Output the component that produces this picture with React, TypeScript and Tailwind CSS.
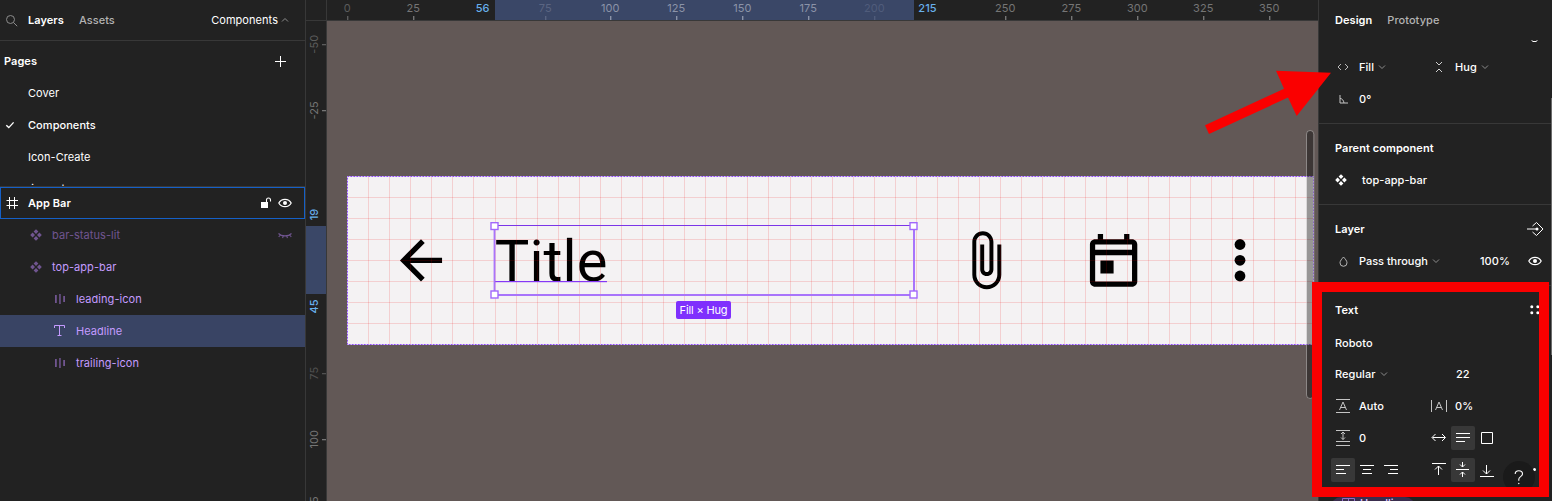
import type { ReactNode } from "react";

type IconProps = { className?: string };

const Chevron = ({ up = false }: { up?: boolean }) => (
  <svg width="8" height="8" viewBox="0 0 8 8" fill="none" stroke="#8c8c8c" strokeWidth="1">
    <path d={up ? "M1 5.5 4 2.5 7 5.5" : "M1 2.5 4 5.5 7 2.5"} />
  </svg>
);

const ComponentIcon = ({ className = "" }: IconProps) => (
  <svg className={className} width="16" height="16" viewBox="0 0 16 16" fill="currentColor">
    <path d="M8 2.2 10.4 4.6 8 7 5.6 4.6Z M8 9 10.4 11.4 8 13.8 5.6 11.4Z M4.6 5.6 7 8 4.6 10.4 2.2 8Z M11.4 5.6 13.8 8 11.4 10.4 9 8Z" />
  </svg>
);

const FrameIcon = () => (
  <svg width="16" height="16" viewBox="0 0 16 16" stroke="#fff" strokeWidth="1">
    <path d="M5.5 2v12M10.5 2v12M2.5 5.5h11.5M2.5 10.5h11.5" />
  </svg>
);

const StackIcon = () => (
  <svg className="text-[#705590]" width="16" height="16" viewBox="0 0 16 16" fill="currentColor">
    <path d="M3 4h1.8v8H3zM7.2 3h1.5v10H7.2zM11.2 5h1.8v6h-1.8z" />
  </svg>
);

const TextIcon = () => (
  <svg width="16" height="16" viewBox="0 0 16 16" fill="none" stroke="#c49bff">
    <path d="M2.5 5V2.5h10V5M7.5 2.5v10M5.5 12.5h4" />
  </svg>
);

const EyeIcon = () => (
  <svg width="16" height="16" viewBox="0 0 16 16" fill="none" stroke="#fff" strokeWidth="1.2">
    <path d="M1.8 8C3.2 5.4 5.4 4.3 8 4.3S12.8 5.4 14.2 8C12.8 10.6 10.6 11.7 8 11.7S3.2 10.6 1.8 8Z" />
    <circle cx="8" cy="8" r="2" fill="#fff" stroke="none" />
  </svg>
);

const ClosedEyeIcon = () => (
  <svg width="16" height="16" viewBox="0 0 16 16" fill="none" stroke="#705590" strokeWidth="1.1">
    <path d="M1.5 6.5C4.5 9.7 11.5 9.7 14.5 6.5M3.3 8 1.7 10M6.2 9 5.6 11.2M9.8 9l.6 2.2M12.7 8l1.6 2" />
  </svg>
);

const UnlockIcon = () => (
  <svg width="12" height="14" viewBox="0 0 12 14" fill="none">
    <rect x="1" y="6" width="7" height="6" fill="#fff" />
    <path d="M6.5 6V4a2 2 0 0 1 4 0v1.5" stroke="#fff" strokeWidth="1.1" />
  </svg>
);

function PageRow({ label, checked = false }: { label: string; checked?: boolean }) {
  return (
    <div className="flex h-8 shrink-0 items-center">
      <div className="flex w-7 pl-[5px]">
        {checked && (
          <svg width="10" height="10" viewBox="0 0 10 10" fill="none" stroke="#fff" strokeWidth="1.4">
            <path d="M1.3 5.2 3.8 7.6 8.6 2.4" />
          </svg>
        )}
      </div>
      <span className={checked ? "font-medium" : ""}>{label}</span>
    </div>
  );
}

function LayerRow({ icon, label, className, trailing }: { icon: ReactNode; label: string; className: string; trailing?: ReactNode }) {
  return (
    <div className={`flex h-8 items-center gap-2 ${className}`}>
      {icon}
      <span>{label}</span>
      <div className="ml-auto">{trailing}</div>
    </div>
  );
}

function LayersPanel() {
  return (
    <aside className="flex h-full w-[306px] shrink-0 flex-col border-r border-[#383838] bg-[#222]">
      <header className="flex h-[41px] shrink-0 items-center border-b border-[#383838] pl-[5px]">
        <svg width="13" height="13" viewBox="0 0 13 13" fill="none" stroke="#8c8c8c" strokeWidth="1">
          <circle cx="5.5" cy="5.5" r="4" />
          <path d="m8.5 8.5 3.7 3.7" />
        </svg>
        <span className="ml-[10px] font-semibold">Layers</span>
        <span className="ml-[15px] font-medium text-[#b3b3b3]">Assets</span>
        <div className="mr-4 ml-auto flex items-center gap-[3px]">
          <span>Components</span>
          <Chevron up />
        </div>
      </header>
      <section className="flex h-[146px] shrink-0 flex-col overflow-hidden border-b border-[#383838] pt-1">
        <div className="flex h-8 shrink-0 items-center justify-between pr-[19px] pl-1 font-semibold">
          <span>Pages</span>
          <svg width="11" height="11" viewBox="0 0 11 11" stroke="#fff">
            <path d="M5.5 0v11M0 5.5h11" />
          </svg>
        </div>
        <PageRow label="Cover" />
        <PageRow label="Components" checked />
        <PageRow label="Icon-Create" />
        <PageRow label=".import" />
      </section>
      <section>
        <LayerRow
          icon={<FrameIcon />}
          label="App Bar"
          className="border border-[#1560c8] pr-[11px] pl-[3px] font-semibold"
          trailing={
            <div className="flex items-center gap-[5px]">
              <UnlockIcon />
              <EyeIcon />
            </div>
          }
        />
        <LayerRow icon={<ComponentIcon />} label="bar-status-lit" className="pr-3 pl-7 text-[#705590]" trailing={<ClosedEyeIcon />} />
        <LayerRow icon={<ComponentIcon className="text-[#705590]" />} label="top-app-bar" className="pl-7 text-[#c49bff]" />
        <LayerRow icon={<StackIcon />} label="leading-icon" className="pl-[52px] text-[#c49bff]" />
        <LayerRow icon={<TextIcon />} label="Headline" className="bg-[#394464] pl-[52px] text-[#c49bff]" />
        <LayerRow icon={<StackIcon />} label="trailing-icon" className="pl-[52px] text-[#c49bff]" />
      </section>
    </aside>
  );
}

const horizontalMarks = [
  { value: "0", at: 347, color: "#5c5c5c" },
  { value: "25", at: 413, color: "#757575" },
  { value: "75", at: 545, color: "#5a6582" },
  { value: "100", at: 610, color: "#8b93a8" },
  { value: "125", at: 676, color: "#8b93a8" },
  { value: "150", at: 742, color: "#8b93a8" },
  { value: "175", at: 808, color: "#8b93a8" },
  { value: "200", at: 874, color: "#505c7b" },
  { value: "250", at: 1005, color: "#757575" },
  { value: "275", at: 1071, color: "#757575" },
  { value: "300", at: 1137, color: "#757575" },
  { value: "325", at: 1203, color: "#757575" },
  { value: "350", at: 1269, color: "#757575" },
];

const verticalMarks = [
  { value: "-50", at: 44, color: "#5c5c5c" },
  { value: "-25", at: 110, color: "#757575" },
  { value: "75", at: 373, color: "#505050" },
  { value: "100", at: 439, color: "#757575" },
  { value: "125", at: 505, color: "#757575" },
];

function HorizontalRuler() {
  return (
    <div className="relative h-[21px] flex-1 overflow-hidden border-b border-[#383838]">
      <div className="absolute top-0 left-[168px] h-5 w-[419px] bg-[#3a4767]" />
      <svg className="absolute inset-0" width="991" height="20" viewBox="327 0 991 20" fontSize="11" textAnchor="middle">
        {horizontalMarks.map((m) => (
          <g key={m.value} fill={m.color}>
            <text x={m.at + 0.3} y="11.5">{m.value}</text>
            <rect x={m.at} y="16" width="1.4" height="4" />
          </g>
        ))}
        <g fill="#68b0ec" fontWeight="500">
          <text x="482.7" y="11.5">56</text>
          <text x="927.5" y="11.5">215</text>
        </g>
      </svg>
    </div>
  );
}

function VerticalRuler() {
  return (
    <div className="relative h-[480px] w-[21px] shrink-0 overflow-hidden border-r border-[#383838]">
      <div className="absolute top-[205px] left-0 h-[68px] w-5 bg-[#3a4767]" />
      <svg className="absolute inset-0" width="20" height="480" viewBox="306 21 20 480" fontSize="11" textAnchor="middle">
        {verticalMarks.map((m) => (
          <g key={m.value} fill={m.color}>
            <text transform={`translate(317.5 ${m.at + 0.3}) rotate(-90)`}>{m.value}</text>
            <rect x="322" y={m.at} width="4" height="1.3" />
          </g>
        ))}
        <g fill="#68b0ec" fontWeight="500">
          <text transform="translate(317.5 214.5) rotate(-90)">19</text>
          <text transform="translate(317.5 306.5) rotate(-90)">45</text>
        </g>
      </svg>
    </div>
  );
}

const gridColumns = Array.from({ length: 45 }, (_, i) => Math.floor(347.5 + 21.074 * (i + 1)));
const gridRows = [197, 218, 239, 260, 281, 302, 323];

function Canvas() {
  return (
    <div className="relative h-[480px] flex-1 overflow-hidden bg-[#625856]">
      <svg className="absolute inset-0" width="991" height="480" viewBox="327 21 991 480">
        <rect x="347" y="176" width="967" height="169" fill="#f4f2f3" />
        <g transform="translate(389.4 228.8) scale(2.633)">
          <path d="M20 11H7.83l5.59-5.59L12 4l-8 8 8 8 1.41-1.41L7.83 13H20v-2z" />
        </g>
        <g transform="translate(953.9 228.6) scale(2.633)">
          <path d="M16.5 6v11.5c0 2.21-1.79 4-4 4s-4-1.79-4-4V5c0-1.38 1.12-2.5 2.5-2.5s2.5 1.12 2.5 2.5v10.5c0 .55-.45 1-1 1s-1-.45-1-1V6H10v9.5c0 1.38 1.12 2.5 2.5 2.5s2.5-1.12 2.5-2.5V5c0-2.21-1.79-4-4-4S7 2.79 7 5v12.5c0 3.04 2.46 5.5 5.5 5.5s5.5-2.46 5.5-5.5V6h-1.5z" />
        </g>
        <g transform="translate(1082 228.8) scale(2.633)">
          <path d="M19 4h-1V2h-2v2H8V2H6v2H5c-1.11 0-1.99.9-1.99 2L3 20c0 1.1.89 2 2 2h14c1.1 0 2-.9 2-2V6c0-1.1-.9-2-2-2zm0 16H5V10h14v10zm0-12H5V6h14v2zM7 12h5v5H7z" />
        </g>
        <g>
          <circle cx="1240" cy="244.5" r="5.4" />
          <circle cx="1240" cy="260.3" r="5.4" />
          <circle cx="1240" cy="276" r="5.4" />
        </g>
        <text x="494.8" y="281" fontSize="57.93" style={{ fontFamily: "Roboto, sans-serif" }}>Title</text>
        <g fill="#f00000" fillOpacity="0.14">
          {gridColumns.map((x) => (
            <rect key={x} x={x} y="176" width="1" height="169" />
          ))}
          {gridRows.map((y) => (
            <rect key={y} x="347" y={y} width="967" height="1" />
          ))}
        </g>
        <rect x="347.5" y="176.5" width="966" height="168" fill="none" stroke="#d6c3f2" />
        <rect x="347.5" y="176.5" width="966" height="168" fill="none" stroke="#8a3ffc" strokeDasharray="1.5 1.5" strokeOpacity="0.9" />
        <rect x="494" y="281" width="113" height="1.2" fill="#8638f5" />
        <rect x="494" y="225" width="420" height="1" fill="#7b35e8" />
        <g fill="#a874fb">
          <rect x="494" y="294" width="420" height="2" />
          <rect x="493.6" y="226" width="1.8" height="69" />
          <rect x="913" y="226" width="2" height="69" />
        </g>
        <g fill="#fff" stroke="#a168fb" strokeWidth="1.4">
          <rect x="491" y="222.7" width="7" height="6.8" />
          <rect x="910" y="222.7" width="7" height="6.8" />
          <rect x="491" y="291" width="7" height="7" />
          <rect x="910" y="291" width="7" height="7" />
        </g>
        <rect x="1306.5" y="130.5" width="7.3" height="268" rx="3.6" fill="#000" fillOpacity="0.38" stroke="#fff" strokeOpacity="0.35" />
      </svg>
      <div className="absolute top-[280px] left-[349px] flex h-[18px] w-[55px] items-center justify-center rounded-[2px] bg-[#7f30fd] tracking-[-0.15px] whitespace-nowrap">
        Fill × Hug
      </div>
    </div>
  );
}

function Cell({ icon, children, chevron = false, className = "w-24" }: { icon: ReactNode; children: ReactNode; chevron?: boolean; className?: string }) {
  return (
    <div className={`flex shrink-0 items-center ${className}`}>
      <div className="mr-1 flex w-6 justify-center">{icon}</div>
      <span className="mr-1 whitespace-nowrap">{children}</span>
      {chevron && <Chevron />}
    </div>
  );
}

function Toggle({ active = false, d, className = "" }: { active?: boolean; d: string; className?: string }) {
  return (
    <div className={`flex h-6 w-6 items-center justify-center rounded-[2px] ${active ? "bg-[#383838]" : ""} ${className}`}>
      <svg width="24" height="24" viewBox="0 0 24 24" fill="none" stroke="#fff">
        <path d={d} />
      </svg>
    </div>
  );
}

function DesignPanel() {
  return (
    <aside className="relative flex h-full w-[234px] shrink-0 flex-col overflow-hidden border-l border-[#383838] bg-[#222] font-medium">
      <header className="flex h-10 shrink-0 items-center gap-[15px] pl-4">
        <span className="font-semibold">Design</span>
        <span className="text-[#b3b3b3]">Prototype</span>
      </header>
      <section className="flex h-[84px] shrink-0 flex-col border-b border-[#383838]">
        <div className="flex h-[11px] justify-end pr-[14px]">
          <svg width="7" height="4" viewBox="0 0 7 4" fill="none" stroke="#fff">
            <path d="M.5.3 2 1.5h3L6.5.3" />
          </svg>
        </div>
        <div className="flex h-8 items-center pl-3">
          <Cell
            chevron
            icon={
              <svg width="12" height="10" viewBox="0 0 12 10" fill="none" stroke="#b8b8b8">
                <path d="M4 2 1 5l3 3M8 2l3 3-3 3" />
              </svg>
            }
          >
            Fill
          </Cell>
          <Cell
            chevron
            icon={
              <svg width="10" height="12" viewBox="0 0 10 12" fill="none" stroke="#d0d0d0">
                <path d="m2 1 3 3 3-3M2 11l3-3 3 3" />
              </svg>
            }
          >
            Hug
          </Cell>
        </div>
        <div className="flex h-8 items-center pl-3">
          <Cell
            icon={
              <svg width="9" height="9" viewBox="0 0 9 9" fill="none" stroke="#c4c4c4">
                <path d="M1 0v8h8M1 3.5c2 0 3.7 1.8 4 4.5" />
              </svg>
            }
          >
            0°
          </Cell>
        </div>
      </section>
      <section className="flex h-[81px] shrink-0 flex-col border-b border-[#383838] pt-2">
        <h2 className="flex h-8 items-center pl-4 font-semibold">Parent component</h2>
        <div className="flex h-8 items-center gap-[13px] pl-[14px]">
          <ComponentIcon />
          <span>top-app-bar</span>
        </div>
      </section>
      <section className="flex h-[81px] shrink-0 flex-col border-b border-[#383838] pt-2">
        <div className="flex h-8 items-center justify-between pr-[8px] pl-4">
          <h2 className="font-semibold">Layer</h2>
          <svg width="17" height="16" viewBox="0 0 17 16" fill="none" stroke="#fff">
            <path d="M0 8h9M5.5 5 9.5 1.5 16 8l-6.5 6.5L5.5 11" />
            <circle cx="10" cy="8" r="1.5" fill="#fff" stroke="none" />
          </svg>
        </div>
        <div className="flex h-8 items-center pl-3">
          <Cell
            chevron
            className="w-[149px]"
            icon={
              <svg width="9" height="11" viewBox="0 0 9 11" fill="none" stroke="#b8b8b8">
                <path d="M4.5 1C3 2.8 1 4.8 1 6.8a3.5 3.5 0 0 0 7 0C8 4.8 6 2.8 4.5 1Z" />
              </svg>
            }
          >
            <span className="tracking-[-0.03px]">Pass through</span>
          </Cell>
          <span>100%</span>
          <div className="mr-[9px] ml-auto">
            <EyeIcon />
          </div>
        </div>
      </section>
      <section className="flex h-[211px] shrink-0 flex-col pt-2">
        <div className="flex h-8 items-center justify-between pr-[12px] pl-4">
          <h2 className="font-semibold">Text</h2>
          <svg width="10" height="10" viewBox="0 0 10 10" fill="#fff">
            <circle cx="1.8" cy="1.8" r="1.5" />
            <circle cx="7.8" cy="1.8" r="1.5" />
            <circle cx="1.8" cy="7.8" r="1.5" />
            <circle cx="7.8" cy="7.8" r="1.5" />
          </svg>
        </div>
        <div className="flex h-8 items-center pt-px pl-4">Roboto</div>
        <div className="flex h-8 items-center pl-4">
          <div className="flex w-[121px] items-center gap-1">
            <span>Regular</span>
            <Chevron />
          </div>
          <span>22</span>
        </div>
        <div className="flex h-8 items-center pl-3">
          <Cell
            icon={
              <svg width="14" height="14" viewBox="0 0 14 14" fill="none" stroke="#c4c4c4">
                <path d="M0 .5h14M0 13.5h14M3.5 11 7 3l3.5 8M4.7 8.5h4.6" />
              </svg>
            }
          >
            Auto
          </Cell>
          <Cell
            icon={
              <svg width="16" height="14" viewBox="0 0 16 14" fill="none" stroke="#c4c4c4">
                <path d="M.5 1v12M15.5 1v12M4.5 11 8 3l3.5 8M5.7 8.5h4.6" />
              </svg>
            }
          >
            0%
          </Cell>
        </div>
        <div className="flex h-8 items-center pl-3">
          <Cell
            icon={
              <svg width="14" height="16" viewBox="0 0 14 16" fill="none" stroke="#c4c4c4">
                <path d="M0 .5h14M0 11.5h14M0 15.5h14M7 2v7.5M5 4l2-2 2 2M5 7.5l2 2 2-2" />
              </svg>
            }
          >
            0
          </Cell>
          <Toggle d="M5.5 11.5h12.5M8.5 8 5 11.5 8.5 15M15 8l3.5 3.5L15 15" />
          <Toggle active d="M5 7.5h14M5 11.5h14M5 15.5h9" />
          <Toggle d="M6.5 6.5h11v11h-11z" />
        </div>
        <div className="flex h-8 items-center pl-3">
          <Toggle active d="M5 7.5h14M5 11.5h8M5 15.5h10" />
          <Toggle d="M5 7.5h14M8 11.5h8M7 15.5h10" />
          <Toggle d="M5 7.5h14M11 11.5h8M9 15.5h10" />
          <Toggle className="ml-6" d="M5 5.5h14M11.5 17V8M8 11.5 11.5 8l3.5 3.5" />
          <Toggle active d="M5 11.5h13M11.5 4v5M9 6.5l2.5 2.5L14 6.5M11.5 19v-5M9 16.5l2.5-2.5 2.5 2.5" />
          <Toggle d="M5 18.5h14M11.5 7v9M8 12.5l3.5 3.5 3.5-3.5" />
        </div>
      </section>
      <div className="flex h-6 w-[84px] shrink-0 translate-x-3 items-start gap-[5px] self-start rounded-[10px] bg-[#3a2d4e] pl-[11px] text-[#d9c4ff]">
        <svg className="mt-px shrink-0" width="13" height="12" viewBox="0 0 13 12" fill="none" stroke="#8f6cc4">
          <path d="M.5 12V.5h12V12M6.5 0v12M0 5h13" />
        </svg>
        <span className="leading-3">Headline</span>
      </div>
      <div className="absolute top-[468px] left-[214px] h-[3px] w-[3px] rounded-full bg-white" />
      <div className="absolute top-[461px] left-[184px] flex h-8 w-8 items-center justify-center rounded-full bg-[#1a1a1a]">
        <svg width="10" height="15" viewBox="0 0 10 15" fill="none" stroke="#fff" strokeWidth="1.1">
          <path d="M1.2 4C1.2 2 2.7.8 4.8.8S8.5 2 8.5 4c0 2.6-3.7 2.7-3.7 5.2v1.5" />
          <circle cx="4.8" cy="13.5" r=".7" fill="#fff" stroke="none" />
        </svg>
      </div>
      <div className="absolute top-[98px] right-0 h-[257px] w-px bg-[#6b6b6b]" />
    </aside>
  );
}

export default function App() {
  return (
    <div className="relative flex h-[501px] w-[1552px] overflow-hidden bg-[#222] font-['Inter',sans-serif] text-[11px] leading-4 tracking-[0.055px] text-white">
      <LayersPanel />
      <main className="flex w-[1012px] shrink-0 flex-col">
        <div className="flex">
          <div className="h-[21px] w-[21px] shrink-0 border-r border-b border-[#383838]" />
          <HorizontalRuler />
        </div>
        <div className="flex">
          <VerticalRuler />
          <Canvas />
        </div>
      </main>
      <DesignPanel />
      <svg className="absolute top-[60px] left-[1200px]" width="140" height="80" viewBox="1200 60 140 80">
        <path fill="#fa0000" d="M1331 72.8 1276 70.7 1284 88.7 1205 125.3 1209 134 1288 97.5 1296.7 116Z" />
      </svg>
      <div className="absolute top-[282px] left-[1312px] h-[215px] w-[237px] border-[10px] border-[#fa0000]" />
    </div>
  );
}
